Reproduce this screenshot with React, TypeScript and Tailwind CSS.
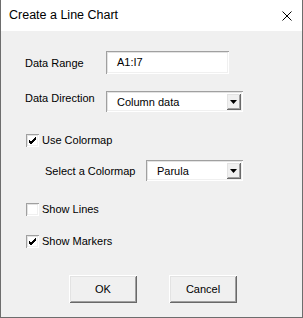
import { useState } from "react";

const raised =
  "shadow-[inset_1px_1px_0_#ffffff,inset_-1px_-1px_0_#696969,inset_2px_2px_0_#e3e3e3,inset_-2px_-2px_0_#a0a0a0]";
const sunken =
  "shadow-[inset_1px_1px_0_#a0a0a0,inset_-1px_-1px_0_#ffffff,inset_2px_2px_0_#e3e3e3,inset_-2px_-2px_0_#f0f0f0]";

function Check({ checked, label, onToggle }: { checked: boolean; label: string; onToggle: () => void }) {
  return (
    <button type="button" onClick={onToggle} className="flex h-[13px] items-center gap-[3px] text-left">
      <span className={`relative flex h-[13px] w-[13px] items-center justify-center bg-white ${sunken}`}>
        {checked ? (
          <svg width="9" height="9" viewBox="0 0 9 9" className="absolute left-[2px] top-[2px]">
            <path d="M1 4 L3 6 L8 1 M1 5 L3 7 L8 2 M1 6 L3 8 L8 3" stroke="#000" strokeWidth="1" fill="none" shapeRendering="crispEdges" />
          </svg>
        ) : null}
      </span>
      <span className="leading-[13px]">{label}</span>
    </button>
  );
}

function Combo({ value, width }: { value: string; width: string }) {
  return (
    <div className={`flex h-[21px] items-stretch bg-white p-[2px] ${sunken} ${width}`}>
      <span className="flex flex-1 items-center pl-[9px] leading-[14px]">{value}</span>
      <span className={`flex w-[15px] items-center justify-center bg-[#f0f0f0] ${raised}`}>
        <svg width="7" height="4" viewBox="0 0 7 4">
          <path d="M0 0 H7 L3.5 4 Z" fill="#000" />
        </svg>
      </span>
    </div>
  );
}

export default function App() {
  const [useColormap, setUseColormap] = useState(true);
  const [showLines, setShowLines] = useState(false);
  const [showMarkers, setShowMarkers] = useState(true);

  return (
    <div
      className="flex h-[318px] w-[303px] flex-col overflow-hidden border-x border-b border-[#6d6d6d] bg-[#f0f0f0] text-[11px] text-black"
      style={{ fontFamily: '"Liberation Sans", Arial, sans-serif' }}
    >
      <div className="flex h-[31px] shrink-0 items-center justify-between bg-white pl-[8px] pr-[10px]">
        <span className="text-[12.5px]">Create a Line Chart</span>
        <svg width="10" height="10" viewBox="0 0 10 10">
          <path d="M0.5 0.5 L9.5 9.5 M9.5 0.5 L0.5 9.5" stroke="#000" strokeWidth="1" />
        </svg>
      </div>

      <div className="flex flex-col pl-[24px]">
        <div className="mt-[20px] flex h-[23px] items-center">
          <span className="w-[81px] leading-[14px]">Data Range</span>
          <div className={`flex h-[23px] w-[123px] items-center bg-white pl-[11px] ${sunken}`}>A1:I7</div>
        </div>

        <div className="mt-[17px] flex items-start">
          <span className="w-[81px] leading-[14px]">Data Direction</span>
          <Combo value="Column data" width="w-[137px]" />
        </div>

        <div className="mt-[22px] pl-[1px]">
          <Check checked={useColormap} label="Use Colormap" onToggle={() => setUseColormap(!useColormap)} />
        </div>

        <div className="mt-[13px] flex items-center pl-[20px]">
          <span className="w-[101px] leading-[14px]">Select a Colormap</span>
          <Combo value="Parula" width="w-[97px]" />
        </div>

        <div className="mt-[22px] pl-[1px]">
          <Check checked={showLines} label="Show Lines" onToggle={() => setShowLines(!showLines)} />
        </div>

        <div className="mt-[19px] pl-[1px]">
          <Check checked={showMarkers} label="Show Markers" onToggle={() => setShowMarkers(!showMarkers)} />
        </div>

        <div className="mt-[27px] flex gap-[32px] pl-[44px]">
          <button type="button" className={`h-[28px] w-[68px] bg-[#f0f0f0] ${raised}`}>
            OK
          </button>
          <button type="button" className={`h-[28px] w-[68px] bg-[#f0f0f0] ${raised}`}>
            Cancel
          </button>
        </div>
      </div>
    </div>
  );
}
